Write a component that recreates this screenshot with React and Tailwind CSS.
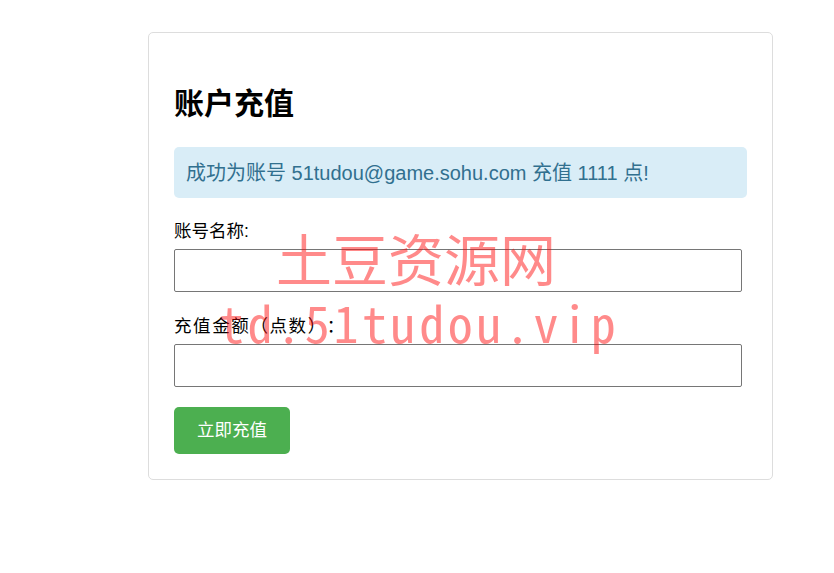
// 账户充值页面 (充值成功后的状态)
export default function App() {
  return (
    <div className="relative min-h-screen bg-white pt-[32px] text-black font-['Liberation_Sans','Noto_Sans_CJK_SC',sans-serif]">
      <div className="ml-[148px] w-[625px] rounded-[5px] border border-[#dddddd] px-[25px] pt-[53px] pb-[25px]">
        {/* 标题 */}
        <h2 className="mb-[25px] text-[30px] leading-[36px] font-bold">账户充值</h2>

        {/* 成功提示 */}
        <div className="flex h-[51px] items-center rounded-[5px] bg-[#d9edf7] px-[12px] text-[20px] text-[#31708f]">
          成功为账号 51tudou@game.sohu.com 充值 1111 点!
        </div>

        <form className="flex flex-col [text-spacing-trim:space-all]">
          <label className="mt-[22px] mb-[7px] text-[17.5px] leading-[22px]">账号名称:</label>
          <input
            type="text"
            className="h-[43px] w-[568px] rounded-[2px] border border-[#767676] px-[12px] text-[17.5px]"
          />

          <label className="mt-[23px] mb-[7px] text-[17.5px] leading-[22px] tracking-[1.6px]">充值金额（点数）：</label>
          <input
            type="number"
            className="h-[43px] w-[568px] rounded-[2px] border border-[#767676] px-[12px] text-[17.5px]"
          />

          <div className="mt-[20px]">
            <button
              type="button"
              className="h-[47px] w-[116px] rounded-[5px] bg-[#4caf50] text-[17.5px] text-white"
            >
              立即充值
            </button>
          </div>
        </form>
      </div>

      {/* 水印 */}
      <div className="pointer-events-none absolute left-[219px] top-[219px] flex flex-col items-start font-['Noto_Sans_Mono_CJK_SC','DejaVu_Sans_Mono','Noto_Sans_CJK_SC',monospace] text-[rgba(255,0,0,0.46)]">
        <span className="ml-[57px] text-[56px] leading-[75px]">土豆资源网</span>
        <span className="text-[50px] leading-[54px] tracking-[3.6px]">td.51tudou.vip</span>
      </div>
    </div>
  );
}
